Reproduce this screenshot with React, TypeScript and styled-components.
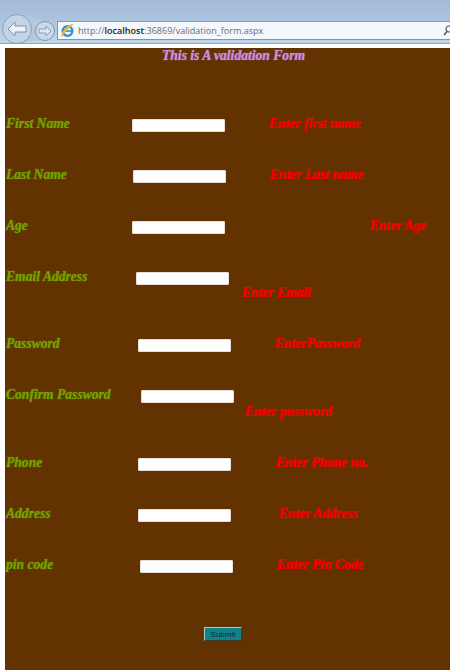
import styled, { createGlobalStyle } from "styled-components";

const Global = createGlobalStyle`
    html, body {
        margin: 0;
        padding: 0;
        width: 450px;
        height: 670px;
        overflow: hidden;
        background: #fff;
    }
`;

const Toolbar = styled.div`
    height: 44px;
    box-sizing: border-box;
    display: flex;
    align-items: flex-end;
    padding-left: 1px;
    background: linear-gradient(#a3bbd6 0%, #a9c2dd 40%, #c2d6ea 100%);
    border-bottom: 1px solid #8fa7c0;
`;

const NavButtons = styled.div`
    display: flex;
    width: 56px;
    height: 34px;
    flex-shrink: 0;
`;

const Address = styled.div`
    flex: 1;
    min-width: 0;
    height: 17px;
    display: flex;
    align-items: center;
    gap: 3px;
    margin-bottom: 3px;
    padding-left: 2px;
    background: #f4f7fb;
    border: 1px solid #7f97b2;
    border-right: none;
    overflow: hidden;
    font: 9.05px "Open Sans", sans-serif;
    color: #6d6d6d;
    white-space: nowrap;

    b {
        color: #222;
        font-weight: 600;
    }
`;

const Url = styled.span`
    flex: 1;
`;

const Page = styled.div`
    margin: 4px 0 0 5px;
    height: 622px;
    background: #623300;
    font: italic bold 13.6px "Liberation Serif", serif;
`;

const Title = styled.div`
    height: 68px;
    padding-left: 157px;
    line-height: 15px;
    color: #c88ce0;
    text-shadow: 0 0 1px #c88ce0;
`;

const Row = styled.div<{ $height: number }>`
    display: flex;
    align-items: flex-start;
    height: ${(p) => p.$height}px;
`;

const Label = styled.label<{ $width: number }>`
    width: ${(p) => p.$width}px;
    flex-shrink: 0;
    padding-left: 1px;
    box-sizing: border-box;
    line-height: 16px;
    color: #73a000;
    text-shadow: 0 0 1px #73a000;
`;

const Field = styled.input`
    width: 93px;
    height: 13px;
    box-sizing: border-box;
    flex-shrink: 0;
    margin: 3px 0 0;
    padding: 0;
    border: 1px solid #e8e0d8;
    border-radius: 1px;
    background: #fff;
`;

const Message = styled.span<{ $left: number; $top: number }>`
    margin: ${(p) => p.$top}px 0 0 ${(p) => p.$left}px;
    line-height: 16px;
    color: #f80000;
    text-shadow: 0 0 1px #f80000;
    white-space: nowrap;
`;

const Actions = styled.div`
    display: flex;
    padding: 19px 0 0 199px;
`;

const Submit = styled.button`
    width: 38px;
    height: 14px;
    padding: 0;
    background: #0e8488;
    border: 1px solid #b8c4b8;
    border-right-color: #3a3a30;
    border-bottom-color: #3a3a30;
    font: 8px "Liberation Sans", sans-serif;
    color: #0a2a2a;
`;

const rows = [
    { label: "First Name", width: 127, height: 51, error: "Enter first name", left: 44, top: 0 },
    { label: "Last Name", width: 128, height: 51, error: "Enter Last name", left: 44, top: 0 },
    { label: "Age", width: 127, height: 51, error: "Enter Age", left: 145, top: 0 },
    { label: "Email Address", width: 131, height: 67, error: "Enter Email", left: 13, top: 16 },
    { label: "Password", width: 133, height: 51, error: "EnterPassword", left: 44, top: 0 },
    { label: "Confirm Password", width: 136, height: 68, error: "Enter password", left: 11, top: 17 },
    { label: "Phone", width: 133, height: 51, error: "Enter Phone no.", left: 45, top: 0 },
    { label: "Address", width: 133, height: 51, error: "Enter Address", left: 48, top: 0 },
    { label: "pin code", width: 135, height: 51, error: "Enter Pin Code", left: 44, top: 0 },
];

function BackIcon() {
    return (
        <svg width="56" height="34" viewBox="0 0 56 34">
            <path d="M16 4 L34 9 L44 16 L44 30 L20 34 Z" fill="#b4c8dc" />
            <circle cx="44" cy="22" r="9.5" fill="#c6d8ea" stroke="#7f97b2" />
            <circle cx="16" cy="20" r="14.5" fill="#c2d4e6" stroke="#8aa0b8" />
            <path d="M7 20 L14 13 V17 H25 V23 H14 V27 Z" fill="#eef3f8" stroke="#7f93a8" />
            <path d="M50 22 L45 17 V20 H38 V24 H45 V27 Z" fill="#dde8f2" stroke="#8aa0b8" />
        </svg>
    );
}

function IeIcon() {
    return (
        <svg width="15" height="15" viewBox="0 0 14 14">
            <circle cx="7" cy="7.5" r="4.5" fill="none" stroke="#2f8fd8" strokeWidth="2.2" />
            <path d="M3 7.5 H11" stroke="#2f8fd8" strokeWidth="1.5" />
            <path d="M1 12 C3 5 8 1 13 1 C11 3 6 6 2 13 Z" fill="#e8b83a" />
        </svg>
    );
}

function SearchIcon() {
    return (
        <svg width="7" height="14" viewBox="0 0 7 14">
            <circle cx="6" cy="5" r="3" fill="none" stroke="#555" strokeWidth="1.2" />
            <path d="M4 7.5 L1 11" stroke="#555" strokeWidth="1.6" />
        </svg>
    );
}

export default function App() {
    return (
        <>
            <Global />
            <Toolbar>
                <NavButtons>
                    <BackIcon />
                </NavButtons>
                <Address>
                    <IeIcon />
                    <Url>
                        http://<b>localhost</b>:36869/validation_form.aspx
                    </Url>
                    <SearchIcon />
                </Address>
            </Toolbar>
            <Page>
                <Title>This is A validation Form</Title>
                {rows.map((row) => (
                    <Row key={row.label} $height={row.height}>
                        <Label $width={row.width}>{row.label}</Label>
                        <Field />
                        <Message $left={row.left} $top={row.top}>
                            {row.error}
                        </Message>
                    </Row>
                ))}
                <Actions>
                    <Submit>Submit</Submit>
                </Actions>
            </Page>
        </>
    );
}
